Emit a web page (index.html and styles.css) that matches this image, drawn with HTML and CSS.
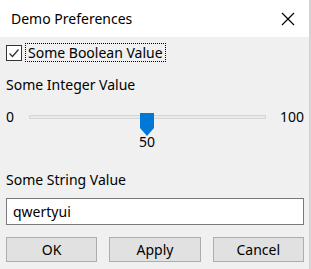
FILE: index.html
```html
<!DOCTYPE html>
<html lang="en">

<head>
  <meta charset='utf-8'>
  <title>Demo Preferences</title>
  <link rel="stylesheet" href="styles.css">
</head>

<body>
  <div class='window'>
    <div class='titlebar'>
      <span class='title'>Demo Preferences</span>
      <div class='close'>
        <svg width='14' height='14' viewBox='0 0 14 14'>
          <path d='M1 1 L13 13 M13 1 L1 13' stroke='#000' stroke-width='1.2' fill='none'/>
        </svg>
      </div>
    </div>
    <div class='content'>
      <div class='checkrow'>
        <div class='checkbox'>
          <svg width='14' height='14' viewBox='0 0 14 14'>
            <path d='M2.5 7.5 L5.5 10.5 L11.5 3.5' stroke='#333' stroke-width='1.3' fill='none'/>
          </svg>
        </div>
        <span class='checklabel'>Some Boolean Value</span>
      </div>

      <div class='label int'>Some Integer Value</div>
      <div class='sliderrow'>
        <span class='min'>0</span>
        <div class='track'>
          <div class='thumb'>
            <svg width='14' height='23' viewBox='0 0 14 23'>
              <path d='M0 0 H14 V15 L7 23 L0 15 Z' fill='#0078d7'/>
            </svg>
          </div>
        </div>
        <span class='max'>100</span>
      </div>
      <div class='value'>50</div>

      <div class='label str'>Some String Value</div>
      <div class='textbox'>qwertyui</div>

      <div class='buttons'>
        <div class='btn'>OK</div>
        <div class='btn'>Apply</div>
        <div class='btn'>Cancel</div>
      </div>
    </div>
  </div>
</body>

</html>
```

FILE: styles.css
```css
* {
  margin: 0;
  padding: 0;
  box-sizing: border-box;
}

body {
  background: #f0f0f0;
  font-family: "Noto Sans", "Open Sans", sans-serif;
  font-size: 14px;
  color: #000;
}

.window {
  width: 311px;
  height: 269px;
  background: #f0f0f0;
  border-right: 2px solid #d4d4d4;
}

.titlebar {
  height: 37px;
  background: #fff;
  display: flex;
  align-items: center;
  justify-content: space-between;
  padding-left: 11px;
  padding-right: 14px;
}

.title {
  line-height: 20px;
}

.close {
  display: flex;
  padding-top: 1px;
}

.content {
  padding: 6px 5px 0 6px;
}

.checkrow {
  display: flex;
  align-items: center;
  height: 19px;
}

.checkbox {
  width: 16px;
  height: 16px;
  border: 1px solid #333;
  background: #fff;
  display: flex;
  align-items: center;
  justify-content: center;
}

.checklabel {
  margin-left: 3px;
  height: 19px;
  line-height: 17px;
  padding: 0 2px;
  border: 1px dotted #000;
}

.label {
  line-height: 20px;
}

.int {
  margin-top: 13px;
}

.sliderrow {
  display: flex;
  align-items: center;
  height: 30px;
  margin-top: 7px;
}

.min {
  width: 23px;
  line-height: 20px;
}

.track {
  flex: 1;
  height: 4px;
  background: #e7eaea;
  border: 1px solid #d6d6d6;
  display: flex;
  justify-content: center;
  align-items: center;
}

.thumb {
  display: flex;
  padding-top: 14px;
  margin-left: -2px;
}

.max {
  width: 38px;
  text-align: right;
  line-height: 20px;
}

.value {
  text-align: center;
  line-height: 20px;
  padding-right: 16px;
}

.str {
  margin-top: 18px;
}

.textbox {
  margin-top: 8px;
  height: 27px;
  background: #fff;
  border: 1px solid #7a7a7a;
  padding-left: 6px;
  line-height: 25px;
}

.buttons {
  display: flex;
  gap: 12px;
  margin-top: 12px;
}

.btn {
  flex: 1;
  height: 25px;
  background: #e1e1e1;
  border: 1px solid #adadad;
  text-align: center;
  line-height: 23px;
}
```
